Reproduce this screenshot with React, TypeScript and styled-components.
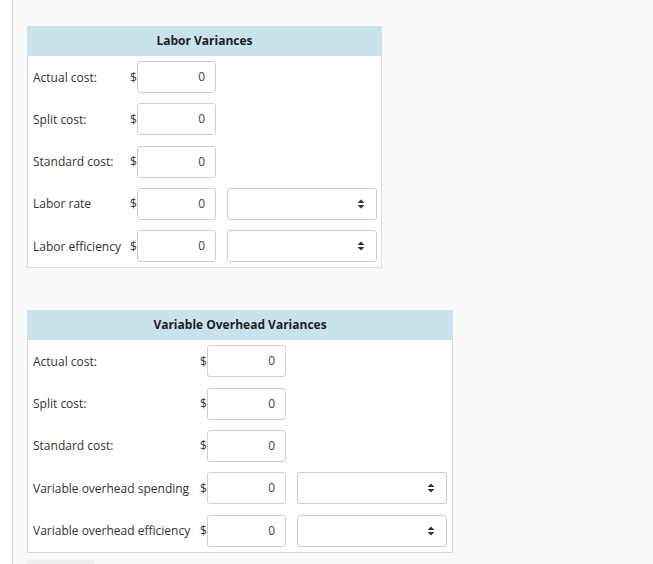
import React from "react";
import styled, { createGlobalStyle } from "styled-components";

const Global = createGlobalStyle`
  html, body { margin: 0; padding: 0; background: #fff; }
  body { font-family: "Open Sans", "Liberation Sans", sans-serif; font-size: 12px; color: #333; }
`;

const Page = styled.div`
  display: flex;
  min-height: 564px;
`;

const Gutter = styled.div`
  width: 12px;
  background: #fff;
  border-right: 1px solid #dcdcdc;
  flex: none;
`;

const Content = styled.div`
  flex: 1;
  background: #fafafa;
  padding: 26px 0 0 14px;
  display: flex;
  flex-direction: column;
  align-items: flex-start;
`;

const Panel = styled.div<{ $w: number; $mb: number }>`
  width: ${(p) => p.$w - 2}px;
  background: #fff;
  border: 1px solid #dcdcdc;
  border-top: none;
  margin-bottom: ${(p) => p.$mb}px;
`;

const Header = styled.div`
  height: 30px;
  margin: 0 -1px;
  background: #c9e3ee;
  color: #1d1d1d;
  font-weight: 700;
  font-size: 12px;
  line-height: 30px;
  text-align: center;
`;

const Body = styled.div`
  padding: 0 0 0 5px;
`;

const Row = styled.div<{ $label: number; $h: number }>`
  height: ${(p) => p.$h}px;
  display: grid;
  grid-template-columns: ${(p) => p.$label}px 7px 79px auto;
  align-items: center;
`;

const Label = styled.span`
  color: #333;
  white-space: nowrap;
`;

const Dollar = styled.span`
  color: #333;
`;

const Input = styled.div`
  box-sizing: border-box;
  height: 32px;
  border: 1px solid #cfcfcf;
  border-radius: 3px;
  background: #fff;
  text-align: right;
  padding-right: 10px;
  line-height: 30px;
  color: #444;
`;

const Select = styled.div`
  box-sizing: border-box;
  width: 150px;
  height: 32px;
  margin-left: 11px;
  border: 1px solid #cfcfcf;
  border-radius: 3px;
  background: #fff;
  display: flex;
  align-items: center;
  justify-content: flex-end;
  padding-right: 11px;
`;

const Button = styled.div`
  width: 68px;
  height: 30px;
  background: #eeeeee;
  border-radius: 3px;
`;

const Arrows = () => (
  <svg width="8" height="10" viewBox="0 0 8 10">
    <path d="M4 0.5 L7.5 4 L0.5 4 Z" fill="#333" />
    <path d="M4 9.5 L7.5 6 L0.5 6 Z" fill="#333" />
  </svg>
);

type RowData = { label: string; select?: boolean };

const labor: RowData[] = [
  { label: "Actual cost:" },
  { label: "Split cost:" },
  { label: "Standard cost:" },
  { label: "Labor rate", select: true },
  { label: "Labor efficiency", select: true },
];

const overhead: RowData[] = [
  { label: "Actual cost:" },
  { label: "Split cost:" },
  { label: "Standard cost:" },
  { label: "Variable overhead spending", select: true },
  { label: "Variable overhead efficiency", select: true },
];

const Section = ({
  title,
  rows,
  width,
  labelW,
  rowH,
  mb,
}: {
  title: string;
  rows: RowData[];
  width: number;
  labelW: number;
  rowH: number;
  mb: number;
}) => (
  <Panel $w={width} $mb={mb}>
    <Header>{title}</Header>
    <Body>
      {rows.map((r) => (
        <Row key={r.label} $label={labelW} $h={rowH}>
          <Label>{r.label}</Label>
          <Dollar>$</Dollar>
          <Input>0</Input>
          {r.select ? (
            <Select>
              <Arrows />
            </Select>
          ) : (
            <span />
          )}
        </Row>
      ))}
    </Body>
  </Panel>
);

export default function App() {
  return (
    <>
      <Global />
      <Page>
        <Gutter />
        <Content>
          <Section
            title="Labor Variances"
            rows={labor}
            width={355}
            labelW={97}
            rowH={42.25}
            mb={42}
          />
          <Section
            title="Variable Overhead Variances"
            rows={overhead}
            width={426}
            labelW={167}
            rowH={42.3}
            mb={7}
          />
          <Button />
        </Content>
      </Page>
    </>
  );
}
